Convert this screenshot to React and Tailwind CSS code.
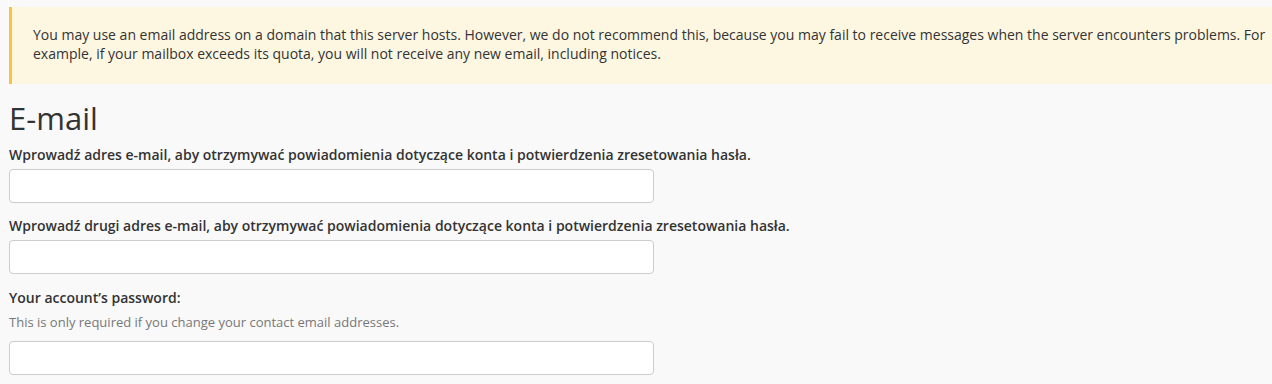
import React from 'react';

const font = { fontFamily: '"Open Sans", "Liberation Sans", sans-serif' };

const Field = ({ label, help, type = 'text', className = '' }) => (
  <div className={className}>
    <label className="block text-[14px] leading-[20px] font-semibold text-[#333]">{label}</label>
    {help ? <p className="text-[13px] leading-[20px] mt-[4px] text-[#777]">{help}</p> : null}
    <input
      type={type}
      className={`block w-[645px] h-[34px] rounded-[4px] border border-[#ccc] bg-white px-3 text-sm ${help ? 'mt-[9px]' : 'mt-[4px]'}`}
    />
  </div>
);

const App = () => {
  return (
    <div className="w-[1272px] h-[384px] overflow-hidden bg-[#f9f9f9] pt-[7px] pl-[9px]" style={font}>
      <div className="border-l-[3px] border-[#f6c342] bg-[#fdf7e2] pl-[21px] pr-0 pt-[18px] pb-[21px] text-[14px] leading-[19px] text-[#333]">
        You may use an email address on a domain that this server hosts. However, we do not recommend this, because you may fail to receive messages when the server encounters problems. For example, if your mailbox exceeds its quota, you will not receive any new email, including notices.
      </div>

      <h1 className="mt-[18px] text-[31px] leading-[33px] font-normal text-[#333]">E-mail</h1>

      <Field
        className="mt-[10px]"
        label="Wprowadź adres e-mail, aby otrzymywać powiadomienia dotyczące konta i potwierdzenia zresetowania hasła."
        type="email"
      />
      <Field
        className="mt-[13px]"
        label="Wprowadź drugi adres e-mail, aby otrzymywać powiadomienia dotyczące konta i potwierdzenia zresetowania hasła."
        type="email"
      />
      <Field
        className="mt-[14px]"
        label="Your account’s password:"
        help="This is only required if you change your contact email addresses."
        type="password"
      />
    </div>
  );
};

export default App;
